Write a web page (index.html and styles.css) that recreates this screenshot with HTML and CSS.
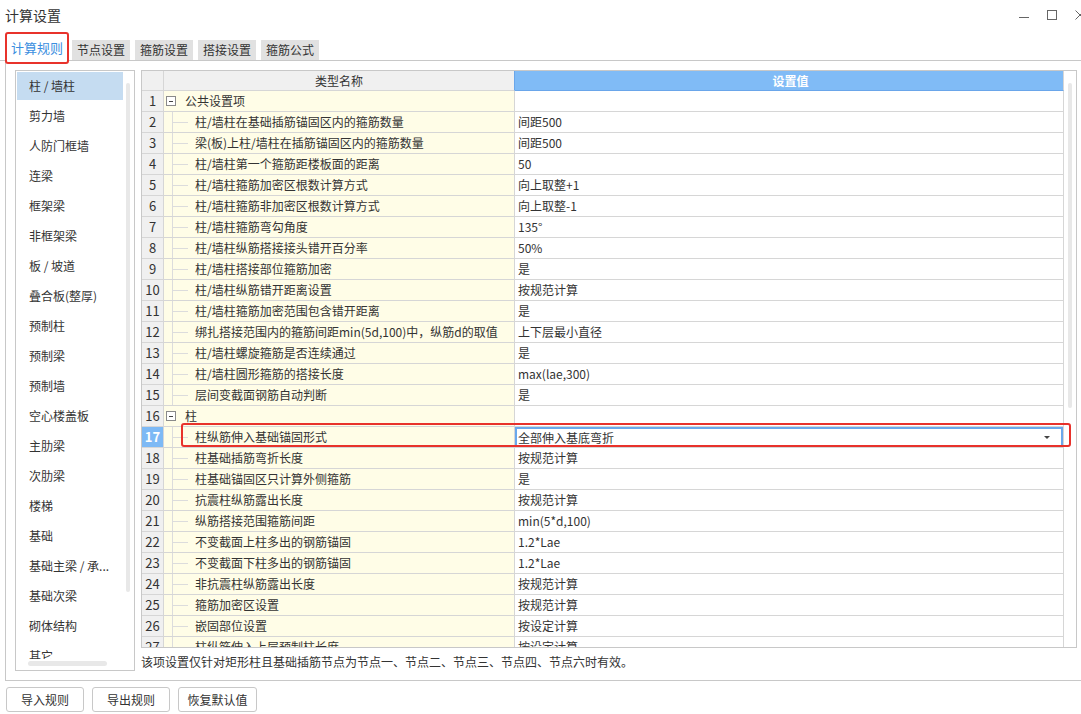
FILE: index.html
```html
<!DOCTYPE html>
<html lang="zh-CN">
<head>
<meta charset="utf-8">
<title>计算设置</title>
<link rel="stylesheet" href="styles.css">
</head>
<body>
<div class="titlebar">
  <span class="title">计算设置</span>
  <div class="controls">
    <svg viewBox="0 0 10 10"><line x1="0" y1="7.5" x2="10" y2="7.5" stroke="#666" stroke-width="1"/></svg>
    <svg viewBox="0 0 10 10"><rect x="0.5" y="0.5" width="9" height="9" fill="none" stroke="#666" stroke-width="1"/></svg>
    <svg viewBox="0 0 10 10"><path d="M0.5 0.5L9.5 9.5M9.5 0.5L0.5 9.5" stroke="#666" stroke-width="1" fill="none"/></svg>
  </div>
</div>
<div class="tabs">
  <div class="tab active">计算规则</div>
  <div class="tab">节点设置</div>
  <div class="tab">箍筋设置</div>
  <div class="tab">搭接设置</div>
  <div class="tab">箍筋公式</div>
</div>
<div class="panel">
  <div class="list">
    <div class="list-view">
      <div class="list-items">
        <div class="item sel">柱 / 墙柱</div>
        <div class="item">剪力墙</div>
        <div class="item">人防门框墙</div>
        <div class="item">连梁</div>
        <div class="item">框架梁</div>
        <div class="item">非框架梁</div>
        <div class="item">板 / 坡道</div>
        <div class="item">叠合板(整厚)</div>
        <div class="item">预制柱</div>
        <div class="item">预制梁</div>
        <div class="item">预制墙</div>
        <div class="item">空心楼盖板</div>
        <div class="item">主肋梁</div>
        <div class="item">次肋梁</div>
        <div class="item">楼梯</div>
        <div class="item">基础</div>
        <div class="item">基础主梁 / 承...</div>
        <div class="item">基础次梁</div>
        <div class="item">砌体结构</div>
        <div class="item">其它</div>
      </div>
      <div class="vtrack"><div class="vthumb"></div></div>
    </div>
    <div class="hscroll"><div class="hthumb"></div></div>
  </div>
  <div class="right">
    <div class="grid">
      <div class="grid-main">
        <div class="row head"><div class="c num"></div><div class="c name">类型名称</div><div class="c val">设置值</div></div>
        <div class="row"><div class="c num">1</div><div class="c name group"><span class="exp"><span class="minus"></span></span><span>公共设置项</span></div><div class="c val"></div></div>
        <div class="row"><div class="c num">2</div><div class="c name child">柱/墙柱在基础插筋锚固区内的箍筋数量</div><div class="c val">间距500</div></div>
        <div class="row"><div class="c num">3</div><div class="c name child">梁(板)上柱/墙柱在插筋锚固区内的箍筋数量</div><div class="c val">间距500</div></div>
        <div class="row"><div class="c num">4</div><div class="c name child">柱/墙柱第一个箍筋距楼板面的距离</div><div class="c val">50</div></div>
        <div class="row"><div class="c num">5</div><div class="c name child">柱/墙柱箍筋加密区根数计算方式</div><div class="c val">向上取整+1</div></div>
        <div class="row"><div class="c num">6</div><div class="c name child">柱/墙柱箍筋非加密区根数计算方式</div><div class="c val">向上取整-1</div></div>
        <div class="row"><div class="c num">7</div><div class="c name child">柱/墙柱箍筋弯勾角度</div><div class="c val">135°</div></div>
        <div class="row"><div class="c num">8</div><div class="c name child">柱/墙柱纵筋搭接接头错开百分率</div><div class="c val">50%</div></div>
        <div class="row"><div class="c num">9</div><div class="c name child">柱/墙柱搭接部位箍筋加密</div><div class="c val">是</div></div>
        <div class="row"><div class="c num">10</div><div class="c name child">柱/墙柱纵筋错开距离设置</div><div class="c val">按规范计算</div></div>
        <div class="row"><div class="c num">11</div><div class="c name child">柱/墙柱箍筋加密范围包含错开距离</div><div class="c val">是</div></div>
        <div class="row"><div class="c num">12</div><div class="c name child">绑扎搭接范围内的箍筋间距min(5d,100)中，纵筋d的取值</div><div class="c val">上下层最小直径</div></div>
        <div class="row"><div class="c num">13</div><div class="c name child">柱/墙柱螺旋箍筋是否连续通过</div><div class="c val">是</div></div>
        <div class="row"><div class="c num">14</div><div class="c name child">柱/墙柱圆形箍筋的搭接长度</div><div class="c val">max(lae,300)</div></div>
        <div class="row"><div class="c num">15</div><div class="c name child">层间变截面钢筋自动判断</div><div class="c val">是</div></div>
        <div class="row"><div class="c num">16</div><div class="c name group"><span class="exp"><span class="minus"></span></span><span>柱</span></div><div class="c val"></div></div>
        <div class="row"><div class="c num cur">17</div><div class="c name child">柱纵筋伸入基础锚固形式</div><div class="c val edit"><span>全部伸入基底弯折</span><span class="arrow"></span></div></div>
        <div class="row"><div class="c num">18</div><div class="c name child">柱基础插筋弯折长度</div><div class="c val">按规范计算</div></div>
        <div class="row"><div class="c num">19</div><div class="c name child">柱基础锚固区只计算外侧箍筋</div><div class="c val">是</div></div>
        <div class="row"><div class="c num">20</div><div class="c name child">抗震柱纵筋露出长度</div><div class="c val">按规范计算</div></div>
        <div class="row"><div class="c num">21</div><div class="c name child">纵筋搭接范围箍筋间距</div><div class="c val">min(5*d,100)</div></div>
        <div class="row"><div class="c num">22</div><div class="c name child">不变截面上柱多出的钢筋锚固</div><div class="c val">1.2*Lae</div></div>
        <div class="row"><div class="c num">23</div><div class="c name child">不变截面下柱多出的钢筋锚固</div><div class="c val">1.2*Lae</div></div>
        <div class="row"><div class="c num">24</div><div class="c name child">非抗震柱纵筋露出长度</div><div class="c val">按规范计算</div></div>
        <div class="row"><div class="c num">25</div><div class="c name child">箍筋加密区设置</div><div class="c val">按规范计算</div></div>
        <div class="row"><div class="c num">26</div><div class="c name child">嵌固部位设置</div><div class="c val">按设定计算</div></div>
        <div class="row"><div class="c num">27</div><div class="c name child">柱纵筋伸入上层预制柱长度</div><div class="c val">按设定计算</div></div>
      </div>
      <div class="gtrack"><div class="gthumb"></div></div>
      <div class="redbox"></div>
    </div>
    <div class="note">该项设置仅针对矩形柱且基础插筋节点为节点一、节点二、节点三、节点四、节点六时有效。</div>
  </div>
</div>
<div class="footer">
  <button class="btn">导入规则</button>
  <button class="btn">导出规则</button>
  <button class="btn wide">恢复默认值</button>
</div>
</body>
</html>
```

FILE: styles.css
```css
* { box-sizing: border-box; }
html, body { margin: 0; padding: 0; background: #fff; }
body {
  width: 1081px;
  height: 714px;
  overflow: hidden;
  font-family: "Noto Sans CJK SC", "Microsoft YaHei", sans-serif;
  font-size: 12px;
  color: #333;
}

.titlebar {
  height: 30px;
  display: flex;
  align-items: center;
  justify-content: space-between;
  padding-left: 5px;
}
.title { font-size: 14px; line-height: 20px; color: #333; }
.controls { display: flex; gap: 18px; margin-right: -4px; }
.controls svg { width: 10px; height: 10px; display: block; }

.tabs {
  height: 31px;
  display: flex;
  align-items: flex-end;
  padding-left: 7px;
  border-bottom: 1px solid #c8c8c8;
}
.tab {
  height: 20px;
  line-height: 20px;
  padding: 0 5px;
  background: #e1e1e1;
  margin-right: 5px;
  font-size: 12px;
  color: #333;
  white-space: nowrap;
}
.tab.active {
  position: relative;
  height: 26px;
  line-height: 25px;
  padding: 0 4px;
  font-size: 13px;
  background: #fff;
  color: #3b8ee0;
  margin-bottom: -1px;
}
.tab.active::after {
  content: "";
  position: absolute;
  left: -2px;
  right: -2px;
  top: -3px;
  bottom: -3px;
  border: 2px solid #e8322b;
  border-radius: 3px;
}

.panel {
  margin-left: 5px;
  height: 620px;
  border-left: 1px solid #c8c8c8;
  border-bottom: 1px solid #c8c8c8;
  padding: 9px 0 0 9px;
  display: flex;
  gap: 6px;
  align-items: flex-start;
}

.list {
  width: 120px;
  height: 601px;
  border: 1px solid #c8c8c8;
  display: flex;
  flex-direction: column;
}
.list-view { height: 588px; display: flex; overflow: hidden; }
.list-items { width: 107px; padding-left: 1px; overflow: hidden; }
.item {
  height: 28px;
  margin: 1px 0 2px;
  line-height: 28px;
  padding-left: 12px;
  white-space: nowrap;
  color: #333;
}
.item.sel { background: #c5dcf1; }
.vtrack { flex: 1; padding: 12px 0 0 3px; }
.vthumb { width: 4px; height: 509px; background: #e8e8e8; border-radius: 2px; }
.hscroll { height: 11px; padding: 2px 0 0 12px; }
.hthumb { width: 79px; height: 5px; background: #e8e8e8; border-radius: 3px; }

.right { width: 936px; display: flex; flex-direction: column; }
.grid {
  width: 936px;
  height: 578px;
  border: 1px solid #c8c8c8;
  display: flex;
  position: relative;
  overflow: hidden;
}
.grid-main { width: 922px; flex: none; }
.gtrack { flex: 1; padding: 12px 0 0 4px; }
.gthumb { width: 4px; height: 325px; background: #e8e8e8; border-radius: 2px; }

.row { display: flex; height: 21px; }
.c {
  height: 21px;
  line-height: 20px;
  border-right: 1px solid #d6d6d6;
  border-bottom: 1px solid #d6d6d6;
  white-space: nowrap;
  overflow: hidden;
}
.num { width: 22px; flex: none; text-align: center; background: #f0f0f0; font-size: 13px; }
.name { width: 351px; flex: none; background: #fffde7; }
.val { width: 549px; flex: none; padding-left: 3px; background: #fff; }

.head { height: 20px; }
.head .c { height: 20px; line-height: 19px; }
.head .name { background: #f0f0f0; text-align: center; border-right-color: #6aa6ea; }
.head .val { background: #80bbf6; color: #fff; text-align: center; border-bottom-color: #6aa6ea; font-weight: bold; }

.name.child {
  padding-left: 31px;
  background:
    linear-gradient(#dcdcdc, #dcdcdc) 8px 0 / 1px 100% no-repeat,
    linear-gradient(#dcdcdc, #dcdcdc) 8px 10px / 16px 1px no-repeat,
    #fffde7;
}
.name.group { display: flex; align-items: center; padding-left: 2px; gap: 9px; }
.exp {
  width: 10px;
  height: 10px;
  border: 1px solid #8a8a8a;
  display: flex;
  align-items: center;
  justify-content: center;
  background: #fff;
}
.minus { width: 4px; height: 1px; background: #444; }

.num.cur { background: #7db9f5; color: #fff; font-weight: bold; }
.val.edit {
  display: flex;
  align-items: center;
  justify-content: space-between;
  padding-right: 13px;
  box-shadow: inset 0 0 0 2px #6aa8ec;
  line-height: 19px;
}
.arrow {
  width: 0;
  height: 0;
  border-left: 3px solid transparent;
  border-right: 3px solid transparent;
  border-top: 3px solid #444;
}

.redbox {
  position: absolute;
  left: 39px;
  top: 352px;
  width: 890px;
  height: 24px;
  border: 2px solid #e8322b;
  border-radius: 3px;
}

.note { margin-top: 6px; line-height: 16px; color: #333; white-space: nowrap; }

.footer { display: flex; gap: 8px; padding: 6px 0 0 6px; }
.btn {
  width: 78px;
  height: 25px;
  border: 1px solid #c8c8c8;
  border-radius: 3px;
  background: #fff;
  font-family: inherit;
  font-size: 12px;
  color: #333;
  padding: 0;
}
.btn.wide { width: 79px; }
```
